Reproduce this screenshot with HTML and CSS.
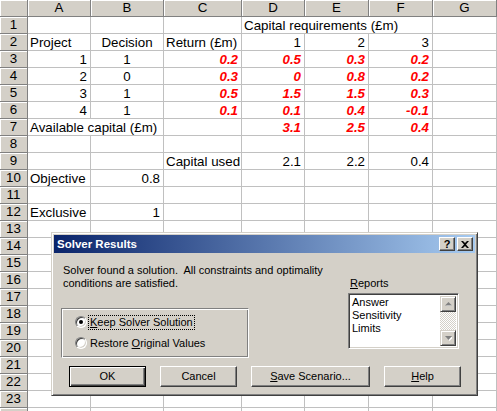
FILE: index.html
```html
<!DOCTYPE html>
<html>
<head>
<meta charset="utf-8">
<link rel="stylesheet" href="styles.css">
</head>
<body>
<div class="screen">
  <div class="sheet">
    <div class="corner"></div><div class="ch">A</div><div class="ch">B</div><div class="ch">C</div><div class="ch">D</div><div class="ch">E</div><div class="ch">F</div><div class="ch">G</div>

    <div class="rh">1</div><div class="c"></div><div class="c"></div><div class="c"></div><div class="c s3">Capital requirements (£m)</div><div class="c"></div>
    <div class="rh">2</div><div class="c">Project</div><div class="c m">Decision</div><div class="c">Return (£m)</div><div class="c r">1</div><div class="c r">2</div><div class="c r">3</div><div class="c"></div>
    <div class="rh">3</div><div class="c r">1</div><div class="c m">1</div><div class="c r x">0.2</div><div class="c r x">0.5</div><div class="c r x">0.3</div><div class="c r x">0.2</div><div class="c"></div>
    <div class="rh">4</div><div class="c r">2</div><div class="c m">0</div><div class="c r x">0.3</div><div class="c r x">0</div><div class="c r x">0.8</div><div class="c r x">0.2</div><div class="c"></div>
    <div class="rh">5</div><div class="c r">3</div><div class="c m">1</div><div class="c r x">0.5</div><div class="c r x">1.5</div><div class="c r x">1.5</div><div class="c r x">0.3</div><div class="c"></div>
    <div class="rh">6</div><div class="c r">4</div><div class="c m">1</div><div class="c r x">0.1</div><div class="c r x">0.1</div><div class="c r x">0.4</div><div class="c r x">-0.1</div><div class="c"></div>
    <div class="rh">7</div><div class="c s2">Available capital (£m)</div><div class="c"></div><div class="c r x">3.1</div><div class="c r x">2.5</div><div class="c r x">0.4</div><div class="c"></div>
    <div class="rh">8</div><div class="c"></div><div class="c"></div><div class="c"></div><div class="c"></div><div class="c"></div><div class="c"></div><div class="c"></div>
    <div class="rh">9</div><div class="c"></div><div class="c"></div><div class="c">Capital used</div><div class="c r">2.1</div><div class="c r">2.2</div><div class="c r">0.4</div><div class="c"></div>
    <div class="rh">10</div><div class="c">Objective</div><div class="c r">0.8</div><div class="c"></div><div class="c"></div><div class="c"></div><div class="c"></div><div class="c"></div>
    <div class="rh">11</div><div class="c"></div><div class="c"></div><div class="c"></div><div class="c"></div><div class="c"></div><div class="c"></div><div class="c"></div>
    <div class="rh">12</div><div class="c">Exclusive</div><div class="c r">1</div><div class="c"></div><div class="c"></div><div class="c"></div><div class="c"></div><div class="c"></div>
    <div class="rh">13</div><div class="c"></div><div class="c"></div><div class="c"></div><div class="c"></div><div class="c"></div><div class="c"></div><div class="c"></div>
    <div class="rh">14</div><div class="c"></div><div class="c"></div><div class="c"></div><div class="c"></div><div class="c"></div><div class="c"></div><div class="c"></div>
    <div class="rh">15</div><div class="c"></div><div class="c"></div><div class="c"></div><div class="c"></div><div class="c"></div><div class="c"></div><div class="c"></div>
    <div class="rh">16</div><div class="c"></div><div class="c"></div><div class="c"></div><div class="c"></div><div class="c"></div><div class="c"></div><div class="c"></div>
    <div class="rh">17</div><div class="c"></div><div class="c"></div><div class="c"></div><div class="c"></div><div class="c"></div><div class="c"></div><div class="c"></div>
    <div class="rh">18</div><div class="c"></div><div class="c"></div><div class="c"></div><div class="c"></div><div class="c"></div><div class="c"></div><div class="c"></div>
    <div class="rh">19</div><div class="c"></div><div class="c"></div><div class="c"></div><div class="c"></div><div class="c"></div><div class="c"></div><div class="c"></div>
    <div class="rh">20</div><div class="c"></div><div class="c"></div><div class="c"></div><div class="c"></div><div class="c"></div><div class="c"></div><div class="c"></div>
    <div class="rh">21</div><div class="c"></div><div class="c"></div><div class="c"></div><div class="c"></div><div class="c"></div><div class="c"></div><div class="c"></div>
    <div class="rh">22</div><div class="c"></div><div class="c"></div><div class="c"></div><div class="c"></div><div class="c"></div><div class="c"></div><div class="c"></div>
    <div class="rh">23</div><div class="c"></div><div class="c"></div><div class="c"></div><div class="c"></div><div class="c"></div><div class="c"></div><div class="c"></div>
    <div class="rh"></div><div class="c"></div><div class="c"></div><div class="c"></div><div class="c"></div><div class="c"></div><div class="c"></div><div class="c"></div>
  </div>

  <div class="dialog">
    <div class="titlebar">
      <span class="title">Solver Results</span>
      <div class="tbtns">
        <div class="tbtn help">?</div>
        <div class="tbtn"><svg width="8" height="7" viewBox="0 0 8 7"><path d="M0 0h2l2 2 2-2h2L5 3.5 8 7H6L4 5 2 7H0l3-3.5z" fill="#000"/></svg></div>
      </div>
    </div>
    <div class="main">
      <div class="leftcol">
        <p class="msg">Solver found a solution.&nbsp; All constraints and optimality<br>conditions are satisfied.</p>
        <div class="group">
          <div class="opt"><span class="radio on"></span><span class="lbl focus"><u>K</u>eep Solver Solution</span></div>
          <div class="opt"><span class="radio"></span><span class="lbl">Restore <u>O</u>riginal Values</span></div>
        </div>
      </div>
      <div class="rightcol">
        <div class="rlabel"><u>R</u>eports</div>
        <div class="listbox">
          <div class="items">
            <div>Answer</div>
            <div>Sensitivity</div>
            <div>Limits</div>
          </div>
          <div class="scroll">
            <div class="sbtn"><svg width="7" height="4" viewBox="0 0 7 4"><path d="M4 1l3 3H1z" fill="#fff"/><path d="M3.5 0L7 3.5H0z" fill="#808080"/></svg></div>
            <div class="track"></div>
            <div class="sbtn"><svg width="7" height="5" viewBox="0 0 7 5"><path d="M1 1h7L4.5 5z" fill="#fff"/><path d="M0 0h7L3.5 4z" fill="#808080"/></svg></div>
          </div>
        </div>
      </div>
    </div>
    <div class="buttons">
      <div class="btn default"><span>OK</span></div>
      <div class="btn"><span>Cancel</span></div>
      <div class="btn wide"><span><u>S</u>ave Scenario...</span></div>
      <div class="btn"><span><u>H</u>elp</span></div>
    </div>
  </div>
</div>
</body>
</html>
```

FILE: styles.css
```css
html, body {
  margin: 0;
  padding: 0;
  background: #fff;
}

.screen {
  position: relative;
  width: 497px;
  height: 411px;
  overflow: hidden;
}

.sheet {
  display: grid;
  grid-template-columns: 28px 63px 73px 78px 63px 64px 64px 64px;
  grid-auto-rows: 17px;
  font-family: "Liberation Sans", Arial, sans-serif;
  font-size: 13.33px;
  color: #000;
}

.corner, .ch, .rh {
  box-sizing: border-box;
  background: #d4d0c8;
  border-right: 1px solid #808080;
  border-bottom: 1px solid #808080;
  box-shadow: inset 1px 1px #fff;
  text-align: center;
  line-height: 16px;
}

.c {
  box-sizing: border-box;
  border-right: 1px solid #c0c0c0;
  border-bottom: 1px solid #c0c0c0;
  line-height: 15px;
  padding: 1px 2px 0 2px;
  white-space: nowrap;
  overflow: visible;
}

.r { text-align: right; padding-right: 3px; }
.m { text-align: center; }
.x { color: #ff0000; font-weight: bold; font-style: italic; }
.s2 { grid-column: span 2; }
.s3 { grid-column: span 3; }

/* Dialog */
.dialog {
  position: absolute;
  left: 51px;
  top: 232px;
  width: 427px;
  height: 164px;
  box-sizing: border-box;
  background: #d4d0c8;
  border: 1px solid;
  border-color: #d4d0c8 #404040 #404040 #d4d0c8;
  box-shadow: inset 1px 1px #fff, inset -1px -1px #808080;
  padding: 2px;
  font-family: "Liberation Sans", Tahoma, sans-serif;
  font-size: 11px;
  color: #000;
}

.titlebar {
  height: 18px;
  background: linear-gradient(to right, #0a246a, #a6caf0);
  display: flex;
  align-items: center;
  justify-content: space-between;
  padding: 0 2px 0 3px;
}

.title {
  color: #fff;
  font-weight: bold;
  font-size: 11.5px;
  line-height: 18px;
}

.tbtns {
  display: flex;
  gap: 2px;
}

.tbtn {
  box-sizing: border-box;
  width: 16px;
  height: 14px;
  background: #d4d0c8;
  border: 1px solid;
  border-color: #fff #404040 #404040 #fff;
  box-shadow: inset -1px -1px #808080;
  display: flex;
  align-items: center;
  justify-content: center;
}

.tbtn.help {
  font-weight: bold;
  font-size: 11px;
  line-height: 12px;
}

.main {
  display: flex;
  padding: 11px 0 0 9px;
}

.leftcol {
  width: 285px;
}

.msg {
  margin: 0;
  line-height: 13px;
  white-space: nowrap;
}

.group {
  box-sizing: border-box;
  margin: 18px 0 0 -2px;
  width: 188px;
  height: 50px;
  border: 1px solid;
  border-color: #808080 #fff #fff #808080;
  box-shadow: inset 1px 1px #fff, inset -1px -1px #808080;
  padding: 7px 0 0 13px;
  display: flex;
  flex-direction: column;
  gap: 9px;
}

.opt {
  display: flex;
  align-items: center;
  gap: 2px;
  height: 12px;
}

.radio {
  position: relative;
  box-sizing: border-box;
  width: 12px;
  height: 12px;
  border-radius: 50%;
  border: 1px solid;
  border-color: #808080 #fff #fff #808080;
  box-shadow: inset 1px 1px #404040, inset -1px -1px #d4d0c8;
  background: #fff;
  flex: none;
}

.radio.on::after {
  content: "";
  position: absolute;
  left: 3px;
  top: 3px;
  width: 4px;
  height: 4px;
  border-radius: 50%;
  background: #000;
}

.lbl {
  line-height: 13px;
  padding: 0 1px;
  white-space: nowrap;
}

.lbl.focus {
  outline: 1px dotted #000;
}

.rightcol {
  padding-top: 13px;
}

.rlabel {
  line-height: 13px;
  padding-left: 2px;
}

.listbox {
  box-sizing: border-box;
  margin-top: 3px;
  width: 111px;
  height: 56px;
  background: #fff;
  border: 1px solid;
  border-color: #808080 #fff #fff #808080;
  box-shadow: inset 1px 1px #404040, inset -1px -1px #d4d0c8;
  padding: 2px;
  display: flex;
}

.items {
  flex: 1;
  padding-left: 1px;
  line-height: 13px;
}

.scroll {
  width: 16px;
  display: flex;
  flex-direction: column;
}

.sbtn {
  box-sizing: border-box;
  width: 16px;
  height: 16px;
  background: #d4d0c8;
  border: 1px solid;
  border-color: #d4d0c8 #404040 #404040 #d4d0c8;
  box-shadow: inset 1px 1px #fff, inset -1px -1px #808080;
  display: flex;
  align-items: center;
  justify-content: center;
}

.track {
  flex: 1;
  background: repeating-conic-gradient(#fff 0 25%, #d4d0c8 0 50%) 0 0 / 2px 2px;
}

.buttons {
  display: flex;
  gap: 14px;
  margin-top: 8px;
  padding-left: 15px;
}

.btn {
  box-sizing: border-box;
  width: 77px;
  height: 21px;
  background: #d4d0c8;
  border: 1px solid;
  border-color: #fff #404040 #404040 #fff;
  box-shadow: inset -1px -1px #808080;
  display: flex;
  align-items: center;
  justify-content: center;
  line-height: 13px;
}

.btn.wide { width: 119px; }

.btn.default {
  border: 1px solid #000;
  box-shadow: inset 1px 1px #fff, inset -1px -1px #404040, inset -2px -2px #808080;
}
```
